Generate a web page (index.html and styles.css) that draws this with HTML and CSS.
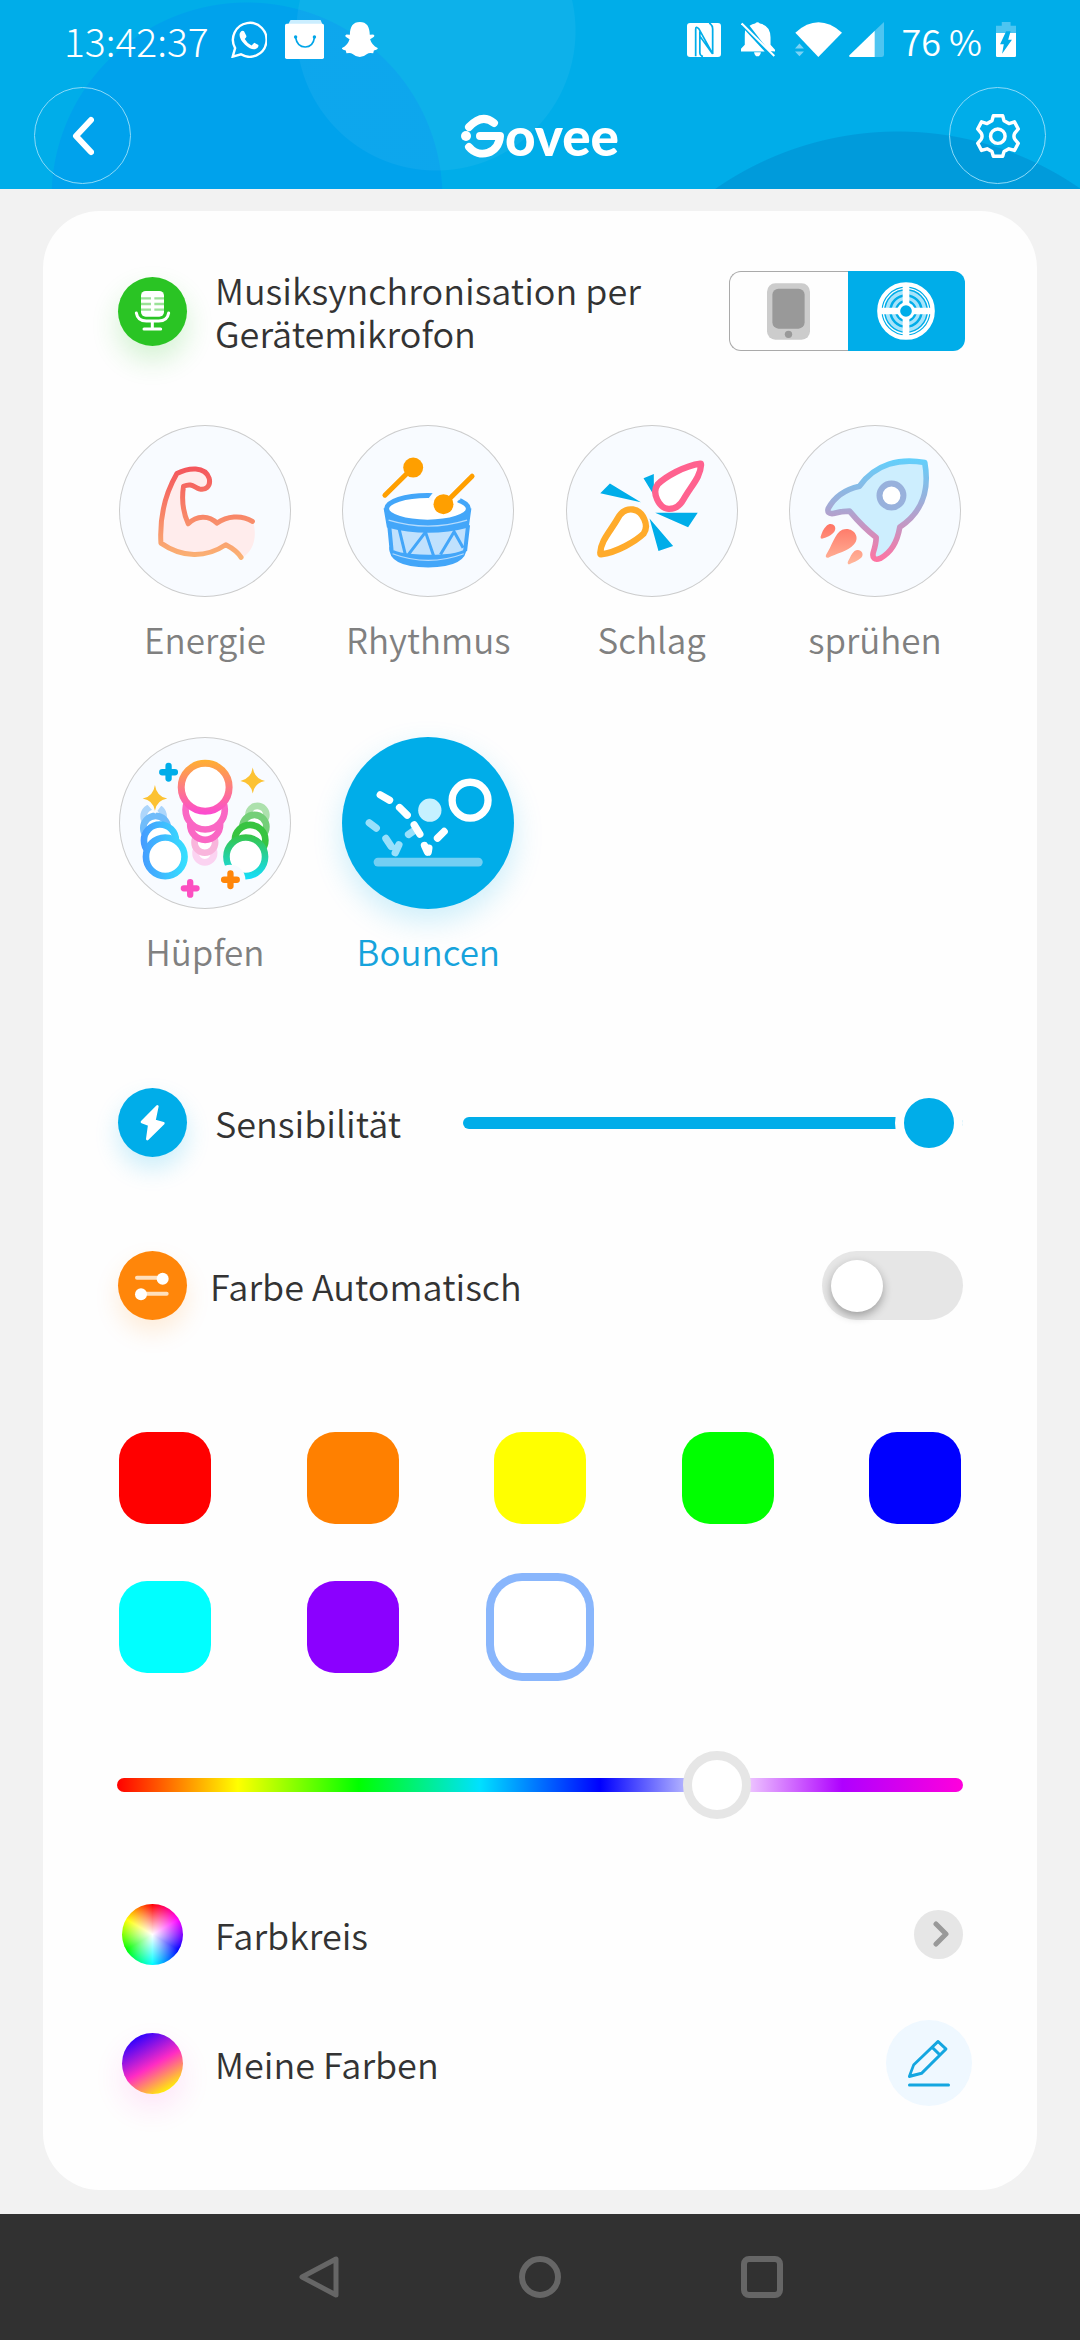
FILE: index.html
```html
<!DOCTYPE html>
<html lang="de">
<head>
<meta charset="utf-8">
<meta name="viewport" content="width=device-width, initial-scale=1">
<title>Govee</title>
<link rel="stylesheet" href="styles.css">
</head>
<body>
<header class="header">
  <div class="status">
    <div class="status-left">
      <time class="clock">13:42:37</time>
      <svg width="36" height="37" viewBox="677 66 105 109" preserveAspectRatio="none"><path d="M682 171l7-25a49 50 0 1 1 17 18z" fill="none" stroke="#fff" stroke-width="7"/><path d="M703 101q5-9 12-5l7 14q1 3-5 9 7 13 20 19l8-8 12 7q1 9-10 12-11 3-29-13-20-19-15-35z" fill="#fff"/></svg>
      <svg width="39" height="39" viewBox="830 60 114 117" preserveAspectRatio="none"><path d="M846 60h88l6 14h-101z" fill="#cbeeff"/><rect x="830" y="71" width="114" height="106" rx="5" fill="#fff"/><path d="M861 113q5 28 28 28t27-28" fill="none" stroke="#00a5e8" stroke-width="5"/><circle cx="861" cy="111" r="5" fill="#00a5e8"/><circle cx="916" cy="111" r="5" fill="#00a5e8"/></svg>
      <svg width="36" height="35" viewBox="996 70 105 104" preserveAspectRatio="none"><path d="M1048 70c20 0 29 14 29 38l10-1q8 4-2 10l-7 4q5 18 22 26 2 5-11 8l-2 8q-12-3-18 2-10 9-21 9t-21-9q-6-5-18-2l-2-8q-13-3-11-8 17-8 22-26l-7-4q-10-6-2-10l10 1c0-24 9-38 29-38z" fill="#fff"/></svg>
    </div>
    <div class="status-right">
      <svg width="34" height="34" viewBox="426 71 98 101" preserveAspectRatio="none"><rect x="426" y="71" width="98" height="101" rx="9" fill="#fff"/><path d="M451 170V90q0-11 9-2l40 75V89q0-12-10-18M463 96v64q0 8 9 11M463 110l36 52" fill="none" stroke="#00ade9" stroke-width="5"/></svg>
      <svg width="34" height="35" viewBox="581 68 99 101" preserveAspectRatio="none"><path d="M606 79q8-6 16-7 7-7 14 0 30 6 31 40v22l13 14v5l-17-1zM593 92l57 61h-69v-8l11-11v-22q0-11 1-20zM619 155h20q-2 12-10 12t-10-12z" fill="#fff"/><path d="M583 72l95 94" stroke="#fff" stroke-width="6"/></svg>
      <svg class="wifi" width="47" height="35" viewBox="737 70 137 102" preserveAspectRatio="none"><path d="M738 101q67-60 136 0l-69 71z" fill="#fff"/><path d="M750 133l13 14h-26zM750 170l13-14h-26z" fill="#7cd3f5"/></svg>
      <svg width="35" height="35" viewBox="893 69 102 104" preserveAspectRatio="none"><path d="M995 69v97q0 7-7 7h-20V95z" fill="#4dc5f1"/><path d="M968 95v78h-72q-5-2-1-6z" fill="#fff"/></svg>
      <span class="battery-text">76 %</span>
      <svg width="20" height="35" viewBox="1321 66 59 105" preserveAspectRatio="none"><path d="M1338 66h26v11h16v23h-59V77h17z" fill="#4dc5f1"/><path d="M1321 99h59v68q0 4-4 4h-51q-4 0-4-4z" fill="#fff"/><path d="M1351 94h13l-7 25h11l-29 42 5-28h-11z" fill="#00ade9"/></svg>
    </div>
  </div>
  <nav class="topbar">
    <button class="round" aria-label="Zurück"><svg width="22" height="40" viewBox="0 0 22 40"><path d="M19 4L4 20l15 16" fill="none" stroke="#fff" stroke-width="6" stroke-linecap="round" stroke-linejoin="round"/></svg></button>
    <h1 class="logo" aria-label="Govee"><svg width="44" height="44" viewBox="0 0 44 44"><g fill="none" stroke="#fff" stroke-width="8" stroke-linecap="round" stroke-linejoin="round"><path d="M8 13Q21 -1 33 9"/><path d="M19 22h20c-1 18-21 23-31 11"/></g><circle cx="5" cy="22" r="5" fill="#fff"/></svg><span>ovee</span></h1>
    <button class="round" aria-label="Einstellungen"><svg width="44" height="44" viewBox="1265 342 127 129" preserveAspectRatio="none"><g fill="none" stroke="#fff" stroke-width="10" stroke-linejoin="round"><path d="M1315 347h27l4 15 14 8 16-5 11 21-10 12q-5 9 0 18l10 12-11 21-16-5-14 8-4 14h-27l-4-14-14-8-16 5-11-21 10-12q5-9 0-18l-10-12 11-21 16 5 14-8z"/><circle cx="1328" cy="407" r="21"/></g></svg></button>
  </nav>
</header>

<main class="main">
  <section class="card">
    <div class="row source">
      <svg class="badge green" viewBox="234 230 207 207"><rect x="303" y="272" width="69" height="77" rx="14" fill="#fff"/><path d="M303 294h30m10 0h29M303 311h30m10 0h29M303 328h30m10 0h29" stroke="#9be298" stroke-width="7"/><path d="M289 338q4 24 30 24h37q26 0 30-24M337 362v24M312 386h50" fill="none" stroke="#fff" stroke-width="9" stroke-linecap="round"/></svg>
      <h2 class="label">Musiksynchronisation per Gerätemikrofon</h2>
      <div class="segment" role="group" aria-label="Mikrofon">
        <button class="seg" aria-label="Telefon" aria-pressed="false"><svg width="43" height="57" viewBox="677 249 128 168"><rect x="677" y="249" width="128" height="168" rx="25" fill="#ccc"/><rect x="693" y="265" width="96" height="119" rx="18" fill="#999"/><circle cx="741" cy="401" r="11" fill="#999"/></svg></button>
        <button class="seg on" aria-label="Gerät" aria-pressed="true"><svg width="58" height="58" viewBox="1011 246 174 174"><g fill="none"><circle cx="1098" cy="333" r="56" stroke="#a6e3fa" stroke-width="11"/><circle cx="1098" cy="333" r="38" stroke="#a6e3fa" stroke-width="10"/><g stroke="#fff"><circle cx="1098" cy="333" r="80" stroke-width="13"/><circle cx="1098" cy="333" r="68" stroke-width="4"/><path d="M1098 253v160M1018 333h160" stroke-width="20"/></g><circle cx="1098" cy="333" r="22" fill="#00ade9" stroke="#fff" stroke-width="9"/></g></svg></button>
      </div>
    </div>

    <div class="modes">
      <button class="mode"><svg class="disc" viewBox="57 75 517 517"><defs><linearGradient id="arm" x1="0" y1="205" x2="0" y2="475" gradientUnits="userSpaceOnUse"><stop offset="0" stop-color="#f4565c"/><stop offset="1" stop-color="#fbb274"/></linearGradient></defs><path d="M231 221c35-18 84-23 97 14 6 25-12 37-30 32-17-7-24-18-47-8-5 31-3 75 14 113 25-25 62-27 86-2 25-15 65-29 109-6 13 48 2 90-35 112l-48-46c-60 40-130 40-194 0-5-80 10-143 48-209z" fill="#ffecec"/><path d="M424 473q-13-21-46-38c-60 40-130 40-195-5-4-71 11-145 48-209 35-18 84-23 97 14 6 25-12 37-30 32-17-7-24-18-47-8-5 31-3 75 14 113 25-25 62-27 86-2 30-20 72-27 107-5" fill="none" stroke="url(#arm)" stroke-width="15" stroke-linejoin="round" stroke-linecap="round"/></svg>Energie</button>
      <button class="mode"><svg class="disc" viewBox="726 75 517 517"><path d="M858 335l23 120c8 54 200 54 214 0l14-120z" fill="#c0e1fd"/><path d="M897 385l20 82M926 464l51-67 24 70M1022 464l41-68 27 48" fill="none" stroke="#43a6f9" stroke-width="9"/><path d="M868 378l7 73M1105 376l-9 78" stroke="#43a6f9" stroke-width="12"/><path d="M868 440q-5 62 117 63 118-1 116-63-10 25-116 25-106-2-117-25z" fill="#43a6f9"/><path d="M878 462q107 40 214 0" fill="none" stroke="#b4dbfd" stroke-width="4"/><path d="M851 325l10 58q125 32 246 0l8-58q-80 58-264 0z" fill="#43a6f9"/><ellipse cx="983" cy="327" rx="123" ry="40" fill="#fff" stroke="#43a6f9" stroke-width="15"/><path d="M866 361q119 36 236 0" fill="none" stroke="#b4dbfd" stroke-width="4"/><path d="M1002 275h80v23l-20 12-66-7-12-5z" fill="#f8fbff"/><path d="M1000 288q-12 49 31 59 45-8 42-52z" fill="#fff"/><path d="M855 286l70-69M1044 302l73-73" stroke="#ff9f00" stroke-width="15" stroke-linecap="round"/><circle cx="940" cy="203" r="30" fill="#ff9f00"/><circle cx="1031" cy="313" r="30" fill="#ff9f00"/></svg>Rhythmus</button>
      <button class="mode"><svg class="disc" viewBox="76 75 517 517"><path d="M208 251l93 56-122-27zM309 235l31-13v64zM344 339h128l-29 43zM327 356l71 83-44 15z" fill="#00ade9"/><path d="M480 191c-48 6-105 40-128 62-20 26 4 72 32 74 22 1 35-10 45-28 24-42 51-67 53-104q0-4-2-4z" fill="#fff" stroke="#ff628f" stroke-width="19"/><path d="M181 464c48-6 105-40 128-62 18-24-1-69-32-73-20-3-35 8-45 26-24 42-51 67-53 104q0 5 2 5z" fill="#fff" stroke="#ffab2b" stroke-width="19"/></svg>Schlag</button>
      <button class="mode"><svg class="disc" viewBox="744 75 517 517"><defs><linearGradient id="ship" x1="0" y1="180" x2="0" y2="485" gradientUnits="userSpaceOnUse"><stop offset="0" stop-color="#63cffb"/><stop offset=".38" stop-color="#98b1dc"/><stop offset="1" stop-color="#ff73a2"/></linearGradient><linearGradient id="flame" x1="0" y1="375" x2="0" y2="490" gradientUnits="userSpaceOnUse"><stop offset="0" stop-color="#ff7565"/><stop offset="1" stop-color="#ffb59a"/></linearGradient></defs><path d="M956 259c48-68 123-85 196-71 14 78-2 145-75 194-7 42-23 75-59 94-17 7-24-3-21-17 6-19 9-32 9-46-31-24-55-49-80-79q-23 0-49 7-20 2-15-15c19-36 50-57 94-67z" fill="#cdeefe" stroke="url(#ship)" stroke-width="17" stroke-linejoin="round"/><circle cx="1052" cy="287" r="36" fill="#fff" stroke="#98b1dc" stroke-width="18"/><path d="M857 378c13-13 33 0 24 16-8 13-26 19-38 23q-5 0-4-6c4-13 8-23 18-33zM904 390c29-12 58 20 35 44-19 21-54 27-77 40-8 1-9-5-6-10 16-22 25-63 48-74zM941 454c13-11 33 5 20 20-12 11-25 14-37 20-5-1-4-7-2-10 7-11 9-22 19-30z" fill="url(#flame)"/></svg>sprühen</button>
      <button class="mode"><svg class="disc" viewBox="57 51 517 517"><defs><linearGradient id="pink" x1="0" y1="120" x2="0" y2="285" gradientUnits="userSpaceOnUse"><stop offset="0" stop-color="#ffb030"/><stop offset="1" stop-color="#fc49d4"/></linearGradient><linearGradient id="blue" x1="125" y1="0" x2="265" y2="0" gradientUnits="userSpaceOnUse"><stop offset="0" stop-color="#459cff"/><stop offset="1" stop-color="#35e2ff"/></linearGradient><linearGradient id="teal" x1="0" y1="340" x2="0" y2="480" gradientUnits="userSpaceOnUse"><stop offset="0" stop-color="#38c440"/><stop offset="1" stop-color="#12deff"/></linearGradient></defs><g fill="#fff" stroke-width="20"><g stroke="#fbd3f1"><circle cx="315" cy="400" r="28"/></g><g stroke="#f9b5dc"><circle cx="315" cy="368" r="31"/></g><g stroke="#fa67c4"><circle cx="316" cy="315" r="45"/><circle cx="316" cy="270" r="59"/></g><circle cx="316" cy="202" r="72" stroke="url(#pink)" stroke-width="21"/><g stroke="#add6fb"><circle cx="161" cy="290" r="30"/></g><g stroke="#70bcfa"><circle cx="167" cy="325" r="37"/></g><g stroke="url(#blue)"><circle cx="180" cy="362" r="48"/><circle cx="196" cy="411" r="58"/></g><circle cx="473" cy="285" r="27" stroke="#ade1ad"/><circle cx="464" cy="321" r="36" stroke="#74cf78"/><circle cx="451" cy="361" r="46" stroke="#38c440"/><circle cx="438" cy="411" r="58" stroke="url(#teal)"/></g><circle cx="392" cy="480" r="45" fill="#f8fbff"/><path d="M120 245h92q-20 17-28 13l-18 24-22-26z" fill="#f8fbff"/><path d="M165 195q5 35 37 41-32 5-37 37-5-32-37-37 32-6 37-41zM459 143q5 34 37 40-32 6-37 38-5-32-37-38 32-6 37-40z" fill="#fcc233"/><path d="M206 138v38M187 157h38" stroke="#00ade9" stroke-width="19" stroke-linecap="round"/><path d="M271 487v38M252 506h38" stroke="#fc4fc1" stroke-width="19" stroke-linecap="round"/><path d="M392 461v38M373 480h38" stroke="#ff860a" stroke-width="19" stroke-linecap="round"/></svg>Hüpfen</button>
      <button class="mode on"><svg class="disc" viewBox="726 51 517 517"><g stroke-linecap="round" fill="none"><path d="M834 427h302" stroke="#73cff3" stroke-width="26"/><g stroke="#99e0fb" stroke-width="22"><path d="M808 309l21 16M858 356l16 24M886 399l11-24M926 344l14-10"/></g><g stroke="#fff" stroke-width="22"><path d="M841 225l28 16M899 263l23 23M943 315l17 28M974 377l9 20M1013 355l20-20M987 385l-2 12"/></g><circle cx="1111" cy="241" r="54" stroke="#fff" stroke-width="22"/></g><circle cx="990" cy="271" r="35" fill="#c6f1ff"/></svg>Bouncen</button>
    </div>

    <div class="row sensitivity">
      <svg class="badge sky" viewBox="114 85 207 207"><path d="M232 140L223 183 250 191 202 238 208 195 186 187Z" fill="#fff" stroke="#fff" stroke-width="8" stroke-linejoin="round"/></svg>
      <label class="label" for="sens">Sensibilität</label>
      <input class="level" id="sens" type="range" min="0" max="100" value="100">
    </div>

    <div class="row auto">
      <svg class="badge orange" viewBox="114 574 207 207"><path d="M171 654h70M190 702h70" stroke="#ffe0bd" stroke-width="12" stroke-linecap="round"/><circle cx="248" cy="657" r="18" fill="#fff"/><circle cx="183" cy="704" r="18" fill="#fff"/></svg>
      <label class="label" for="auto">Farbe Automatisch</label>
      <input class="switch" id="auto" type="checkbox" role="switch">
    </div>

    <div class="swatches">
      <button class="swatch red" aria-label="Rot"></button>
      <button class="swatch amber" aria-label="Orange"></button>
      <button class="swatch yellow" aria-label="Gelb"></button>
      <button class="swatch lime" aria-label="Grün"></button>
      <button class="swatch blue" aria-label="Blau"></button>
      <button class="swatch cyan" aria-label="Cyan"></button>
      <button class="swatch violet" aria-label="Violett"></button>
      <button class="swatch white picked" aria-label="Weiß"></button>
    </div>

    <input class="hue" type="range" min="0" max="1000" value="727" aria-label="Farbton">

    <div class="row wheel-row">
      <span class="ball wheel"></span>
      <span class="label">Farbkreis</span>
      <button class="more" aria-label="Farbkreis öffnen"><svg width="16" height="26" viewBox="0 0 16 26"><path d="M3 3l10 10L3 23" fill="none" stroke="#999" stroke-width="5" stroke-linecap="round" stroke-linejoin="round"/></svg></button>
    </div>
    <div class="row mine-row">
      <span class="ball mine"></span>
      <span class="label">Meine Farben</span>
      <button class="edit" aria-label="Bearbeiten"><svg width="42" height="47" viewBox="1046 808 126 119" preserveAspectRatio="none"><g fill="none" stroke="#14a6e0" stroke-width="8" stroke-linejoin="round" stroke-linecap="round"><path d="M1136 812l24 19-73 61-37 8 13-29zM1119 827l23 19M1050 922h118"/></g></svg></button>
    </div>
  </section>
</main>

<footer class="system">
  <button aria-label="Zurück"><svg width="42" height="44" viewBox="0 0 42 44"><path d="M39 4v36L5 22z" fill="none" stroke="#666" stroke-width="5" stroke-linejoin="round"/></svg></button>
  <button aria-label="Startseite"><svg width="42" height="44" viewBox="0 0 42 44"><circle cx="21" cy="22" r="18" fill="none" stroke="#666" stroke-width="6"/></svg></button>
  <button aria-label="Übersicht"><svg width="42" height="44" viewBox="0 0 42 44"><rect x="3" y="4" width="36" height="36" rx="5" fill="none" stroke="#666" stroke-width="6"/></svg></button>
</footer>
</body>
</html>
```
FILE: styles.css
```css
* { box-sizing: border-box; }
body {
  margin: 0;
  min-height: 100vh;
  display: flex;
  flex-direction: column;
  background: #f2f2f2;
  color: #333;
  font-family: "Noto Sans CJK SC", "Noto Sans", sans-serif;
  font-weight: 350;
}
button {
  margin: 0;
  padding: 0;
  border: 0;
  background: none;
  font: inherit;
  color: inherit;
}
svg { display: block; flex: none; }

.header {
  height: 189px;
  color: #fff;
  background:
    radial-gradient(circle at 436px 31px, #ffffff0d 139px, transparent 140px),
    radial-gradient(circle at 247px 198px, #00a2ec 195px, transparent 196px),
    radial-gradient(circle at calc(100% - 182px) 451px, #009bdb 319px, transparent 320px),
    #00ade9;
}
.status {
  height: 79px;
  padding: 0 64px;
  display: flex;
  justify-content: space-between;
  font-size: 36px;
  line-height: 48px;
}
.status-left, .status-right { display: flex; align-items: center; }
.status-left { gap: 18px; }
.status-right { gap: 20px; }
.clock { margin-right: 4px; font-size: 39px; font-weight: 300; }
.wifi { margin-right: -13px; }
.battery-text { margin: 0 -6px 0 -2px; }
.topbar {
  padding: 8px 34px 0;
  display: flex;
  justify-content: space-between;
  align-items: center;
}
.round {
  width: 97px;
  height: 97px;
  border: 1px solid #8cdaf8;
  border-radius: 50%;
  display: grid;
  place-items: center;
}
.logo {
  margin: 0;
  display: flex;
  align-items: center;
  font: 900 53px/44px Lato, sans-serif;
}

.main { padding: 22px 43px 24px; }
.card {
  padding: 60px 74px 84px;
  border-radius: 57px;
  background: #fefefe;
}
.row { display: flex; align-items: center; }
.label {
  margin: 0 0 0 28px;
  font-size: 36px;
  font-weight: 350;
  line-height: 43px;
}
.source { height: 80px; }
.source .label { width: 450px; }
.badge {
  width: 69px;
  height: 69px;
  margin-left: 1px;
  border-radius: 50%;
}
.green { background: #2ac424; box-shadow: 0 14px 28px #2ac42433; }
.sky { background: #00ade9; box-shadow: 0 12px 24px #00ade933; }
.orange { background: #ff860a; box-shadow: 0 12px 24px #ff860a26; }

.segment {
  display: flex;
  width: 236px;
  height: 80px;
  margin: 0 -2px 0 auto;
}
.seg {
  flex: 1;
  display: grid;
  place-items: center;
  border: 1px solid #aaa;
  border-right: 0;
  border-radius: 12px 0 0 12px;
}
.seg.on {
  border: 0;
  border-radius: 0 12px 12px 0;
  background: #00ade9;
}

.modes {
  margin: 74px 2px 0;
  display: grid;
  grid-template-columns: repeat(4, 172px);
  justify-content: space-between;
  row-gap: 74px;
}
.mode {
  display: flex;
  flex-direction: column;
  align-items: center;
  gap: 18px;
  font-size: 35px;
  line-height: 48px;
  color: #808080;
}
.disc {
  width: 172px;
  height: 172px;
  border-radius: 50%;
  background: #f8fbff;
  box-shadow: inset 0 0 0 1px #ccc;
}
.mode.on { color: #16a3dc; }
.mode.on .disc { background: #00ade9; box-shadow: 0 12px 30px #00ade933; }

.sensitivity { height: 69px; margin-top: 113px; }
.auto { margin-top: 94px; }
.auto .label { margin-left: 23px; }
.level, .hue, .switch { appearance: none; margin: 0; background: none; }
.level { width: 500px; height: 68px; margin-left: auto; }
.level::-webkit-slider-runnable-track {
  height: 12px;
  border-radius: 6px;
  background: #00ade9;
}
.level::-webkit-slider-thumb {
  appearance: none;
  width: 68px;
  height: 68px;
  margin-top: -28px;
  border: 9px solid #fefefe;
  border-radius: 50%;
  background: #00ade9;
}
.switch {
  width: 141px;
  height: 69px;
  margin-left: auto;
  padding: 9px;
  border-radius: 35px;
  background: #e6e6e6;
}
.switch::before {
  content: "";
  display: block;
  width: 52px;
  height: 52px;
  border-radius: 50%;
  background: #fff;
  box-shadow: 0 4px 10px #00000050;
}

.swatches {
  margin: 112px 2px 0;
  display: grid;
  grid-template-columns: repeat(5, 92px);
  justify-content: space-between;
  row-gap: 57px;
}
.swatch { height: 92px; border-radius: 28px; }
.red { background: #f00; }
.amber { background: #ff8000; }
.yellow { background: #ff0; }
.lime { background: #0f0; }
.blue { background: #00f; }
.cyan { background: #0ff; }
.violet { background: #8b00ff; }
.white { background: #fff; }
.picked { box-shadow: 0 0 0 8px #89b6fc; }

.hue { display: block; width: 100%; height: 68px; margin-top: 78px; }
.hue::-webkit-slider-runnable-track {
  height: 14px;
  border-radius: 7px;
  background: linear-gradient(90deg, #f00, #ff0, #0f0, #00e1ff, #00f, #fff, #af00ff, #ff00dc);
}
.hue::-webkit-slider-thumb {
  appearance: none;
  width: 68px;
  height: 68px;
  margin-top: -27px;
  border: 9px solid #e6e6e6;
  border-radius: 50%;
  background: #fff;
}

.wheel-row { height: 86px; margin-top: 72px; }
.mine-row { height: 86px; margin-top: 43px; }
.ball { width: 61px; height: 61px; margin: 0 4px 0 5px; border-radius: 50%; }
.wheel {
  background:
    radial-gradient(circle, #fff, transparent 70%),
    conic-gradient(#f00, #f0f 60deg, #00f 120deg, #0ff 180deg, #0f0 240deg, #ff0 300deg, #f00);
}
.mine {
  background: linear-gradient(150deg, #2a00ff 12%, #ff2bc4 52%, #ffea0c 86%);
  box-shadow: 0 14px 30px #ff2bc41f;
}
.more, .edit { display: grid; place-items: center; margin-left: auto; border-radius: 50%; }
.more { width: 49px; height: 49px; background: #e6e6e6; padding-left: 5px; }
.edit { width: 86px; height: 86px; margin-right: -9px; background: #eff8ff; }

.system {
  flex: 1;
  min-height: 126px;
  display: flex;
  justify-content: center;
  align-items: center;
  gap: 180px;
  background: #313131;
}
```
